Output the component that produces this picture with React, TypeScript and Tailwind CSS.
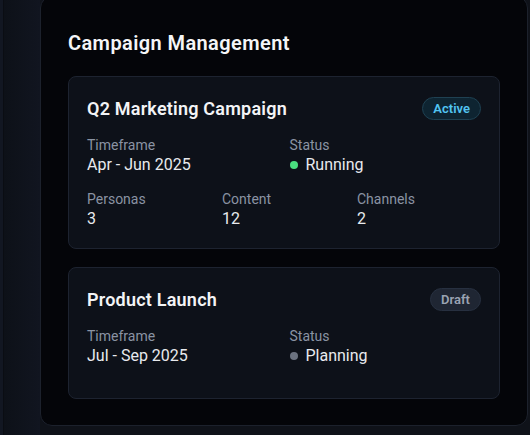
const campaigns = [
  {
    name: "Q2 Marketing Campaign",
    badge: "Active",
    timeframe: "Apr - Jun 2025",
    status: "Running",
    stats: [
      { label: "Personas", value: "3" },
      { label: "Content", value: "12" },
      { label: "Channels", value: "2" },
    ],
  },
  {
    name: "Product Launch",
    badge: "Draft",
    timeframe: "Jul - Sep 2025",
    status: "Planning",
    stats: [],
  },
];

type Campaign = (typeof campaigns)[number];

const CampaignCard = ({ campaign }: { campaign: Campaign }) => {
  const active = campaign.badge === "Active";
  return (
    <div className="rounded-lg border border-[#1d2330] bg-[#0d1119] px-[18px] pt-[19px] pb-[19px]">
      <div className="flex items-center justify-between">
        <h3 className="mt-px text-[18px] leading-6 font-semibold tracking-[0.012em] text-[#f3f4f6]">{campaign.name}</h3>
        <span
          className={
            active
              ? "flex h-[23px] items-center rounded-full border border-[#1f4152] bg-[#0e2431] px-[10px] text-[13px] font-semibold text-[#52c5f2]"
              : "flex h-[23px] items-center rounded-full border border-[#273040] bg-[#1f2633] px-[10px] text-[13px] font-semibold text-[#9aa3b2]"
          }
        >
          {campaign.badge}
        </span>
      </div>
      <div className="mt-[14px] grid grid-cols-2 gap-x-[11px]">
        <div>
          <p className="text-[14px] leading-5 text-[#8a93a3]">Timeframe</p>
          <p className="text-[16px] leading-5 text-[#e8eaee]">{campaign.timeframe}</p>
        </div>
        <div>
          <p className="text-[14px] leading-5 text-[#8a93a3]">Status</p>
          <div className="flex items-center gap-2">
            <span className={active ? "h-2 w-2 rounded-full bg-[#4ade80]" : "h-2 w-2 rounded-full bg-[#6b7280]"} />
            <p className="text-[16px] leading-5 text-[#e8eaee]">{campaign.status}</p>
          </div>
        </div>
      </div>
      {campaign.stats.length > 0 ? (
        <div className="mt-[14px] grid grid-cols-3 gap-x-[11px]">
          {campaign.stats.map((s) => (
            <div key={s.label}>
              <p className="text-[14px] leading-5 text-[#8a93a3]">{s.label}</p>
              <p className="text-[16px] leading-5 text-[#e8eaee]">{s.value}</p>
            </div>
          ))}
        </div>
      ) : (
        <div className="h-[13px]" />
      )}
    </div>
  );
};

export default function App() {
  return (
    <div
      className="flex h-[435px] w-[530px] overflow-hidden bg-[#0f1219]"
      style={{ fontFamily: 'Roboto, "Noto Sans", sans-serif' }}
    >
      <div className="w-[3px] bg-[#121722]" />
      <div className="w-[37px] border-l border-[#0a0d13] bg-gradient-to-r from-[#0d1118] to-[#111520]" />
      <div className="-mt-[4px] mb-[9px] flex h-[430px] w-[488px] flex-col rounded-xl border border-[#1c212c] bg-[#040509] px-[27px] pt-[32px]">
        <h2 className="text-[20px] leading-7 font-semibold tracking-[0.02em] text-[#f5f6f8]">Campaign Management</h2>
        <div className="mt-[19px] flex flex-col gap-[18px]">
          {campaigns.map((c) => (
            <CampaignCard key={c.name} campaign={c} />
          ))}
        </div>
      </div>
    </div>
  );
}
